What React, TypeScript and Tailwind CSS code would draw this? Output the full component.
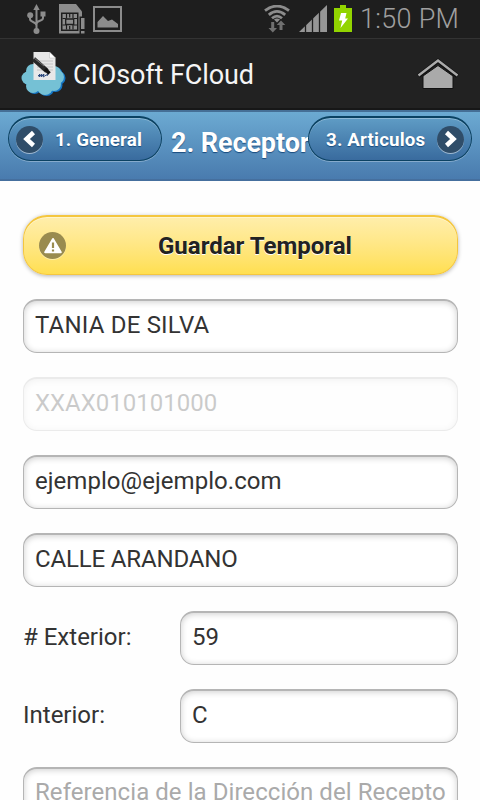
type FieldProps = {
  value: string;
  disabled?: boolean;
  placeholder?: boolean;
  spacing?: string;
};

function UsbIcon() {
  return (
    <svg width="20" height="30" viewBox="0 0 20 30" fill="#8c8c8c">
      <path d="M9.500 0l3.200 6H6.300z" />
      <path
        d="M9.500 5v21M3 12v3c0 3.500 6.500 2.500 6.500 6.500M16 9v5c0 3.500-6.500 2-6.500 6"
        fill="none"
        stroke="#8c8c8c"
        strokeWidth="2"
      />
      <circle cx="3.200" cy="11.300" r="3" />
      <rect x="13.500" y="7.500" width="5" height="5" />
      <circle cx="9.500" cy="27" r="3" />
    </svg>
  );
}

function SimIcon() {
  return (
    <svg width="27" height="30" viewBox="0 0 27 30">
      <path d="M0 0h17l6 7.500v22H0z" fill="#8c8c8c" />
      <path d="M2 8.500h17.500v18.500H2z" fill="#1e1e1e" />
      <path d="M3.500 10h14.500v15.500H3.500z" fill="#8c8c8c" />
      <path
        d="M7.500 10v4.500M10.700 10v3.500M14 10v4.500M7.500 25.500v-4.500M10.700 25.500v-3.500M14 25.500v-4.500M3.500 14.500h3M15 14.500h3M3.500 21h3M15 21h3"
        stroke="#1e1e1e"
        strokeWidth="1.200"
      />
      <path d="M6.700 15h8v5.500h-8z" fill="none" stroke="#1e1e1e" strokeWidth="1.300" />
      <path d="M20.500 12.500h6V30h-6z" fill="#1e1e1e" />
      <path d="M22 14h3.500v11H22zM22 27h3.500v2.500H22z" fill="#8c8c8c" />
    </svg>
  );
}

function GalleryIcon() {
  return (
    <svg width="29" height="26" viewBox="0 0 29 26">
      <rect x="1" y="1" width="27" height="24" fill="none" stroke="#8c8c8c" strokeWidth="2" />
      <path d="M4.500 21.500v-5.500l5.500-6 5 5 4-1.500 6 4.500v3.500z" fill="#8c8c8c" />
    </svg>
  );
}

function WifiIcon() {
  return (
    <svg width="26" height="28" viewBox="0 0 26 28">
      <g fill="none" stroke="#8c8c8c" strokeWidth="2.800">
        <path d="M1 5.700Q13-3.500 25 5.700" />
        <path d="M4.800 9.800Q13 3 21.200 9.800" />
        <path d="M8 13.300Q13 9 18 13.300" />
      </g>
      <path d="M13 17.500l-3-3q3-2 6 0z" fill="#8c8c8c" />
      <path
        d="M7.200 17h3v6h2.800l-4.200 4.500L4.500 23h2.700zM15.500 25h3v-5h2.800L17 15.500 12.700 20h2.800z"
        fill="#707070"
      />
    </svg>
  );
}

function SignalIcon() {
  return (
    <svg width="28" height="28" viewBox="0 0 28 28">
      <path d="M28 0v27H0z" fill="#969696" />
      <path d="M6.500 19v8M13.500 12v15M20.500 5v22" stroke="#1e1e1e" strokeWidth="1.300" />
    </svg>
  );
}

function BatteryIcon() {
  return (
    <svg width="18" height="27" viewBox="0 0 18 27">
      <path d="M6 0h6v3h6v24H0V3h6z" fill="#92d400" />
      <path d="M7 8h5.500l-1.300 5.500H14L6.500 23l1.700-7.500H5z" fill="#fff" />
    </svg>
  );
}

function StatusBar() {
  return (
    <div className="flex h-[39px] items-start border-b border-[#333] bg-[#1e1e1e]">
      <div className="ml-[27px] mt-[4px]"><UsbIcon /></div>
      <div className="ml-[12px] mt-[4px]"><SimIcon /></div>
      <div className="ml-[7px] mt-[6px]"><GalleryIcon /></div>
      <div className="ml-[142px] mt-[5px]"><WifiIcon /></div>
      <div className="ml-[9px] mt-[5px]"><SignalIcon /></div>
      <div className="ml-[7px] mt-[5px]"><BatteryIcon /></div>
      <span className="ml-[8px] mt-[3px] text-[27px] font-light leading-[32px] tracking-[0.3px] text-[#a0a0a0]">
        1:50 PM
      </span>
    </div>
  );
}

function CloudLogo() {
  return (
    <svg width="46" height="46" viewBox="0 0 46 46">
      <g fill="#1576c5" transform="translate(1.500 1)">
        <circle cx="12" cy="20" r="7" />
        <circle cx="7" cy="27" r="6.500" />
        <circle cx="12" cy="35" r="7" />
        <circle cx="24" cy="36" r="8" />
        <circle cx="33" cy="33" r="7" />
        <circle cx="36" cy="26" r="7" />
        <circle cx="33" cy="22" r="7" />
      </g>
      <g fill="#75c1d5">
        <circle cx="12" cy="20" r="7" />
        <circle cx="7" cy="27" r="6.500" />
        <circle cx="12" cy="35" r="7" />
        <circle cx="24" cy="36" r="8" />
        <circle cx="33" cy="33" r="7" />
        <circle cx="36" cy="26" r="7" />
        <circle cx="33" cy="22" r="7" />
        <path d="M10 18h22v20H10z" />
      </g>
      <path d="M12.500 1h16l6 6v22h-22z" fill="#e8e8e8" />
      <path d="M28.500 1v6h6z" fill="#fff" stroke="#bbb" strokeWidth=".5" />
      <path d="M16 10h16M16 13h16M16 16h16M16 19h16" stroke="#c4c4c4" />
      <path d="M17 25l2-2-1 3 3-3-1 3 3-3-1 3 5-3-1 2" fill="none" stroke="#304c80" />
      <path d="M12.500 8l13.500 12" stroke="#292929" strokeWidth="5" />
      <path d="M24 18l4.500 4.500" stroke="#141414" strokeWidth="3.500" />
      <path d="M13 7l10 8" stroke="#777" strokeWidth="1" />
    </svg>
  );
}

function HomeIcon() {
  return (
    <svg width="42" height="32" viewBox="0 0 42 32">
      <path d="M6 30.500V18L21 7.500 36 18v12.500z" fill="#aaa" stroke="#111" />
      <path d="M1.500 18L21 3l19.500 15" fill="none" stroke="#111" strokeWidth="4.500" />
      <path d="M1.500 17.500L21 2.500l19.500 15" fill="none" stroke="#aaa" strokeWidth="2.400" />
    </svg>
  );
}

function AppBar() {
  return (
    <div className="flex h-[71px] items-center border-b-2 border-[#171717] bg-[#222] px-[21px]">
      <CloudLogo />
      <span className="ml-[6px] mt-[2px] text-[27px] leading-[32px] tracking-[-0.1px] text-[#f5f5f5]">
        CIOsoft FCloud
      </span>
      <div className="ml-auto mt-[1px]"><HomeIcon /></div>
    </div>
  );
}

function ArrowBadge({ left }: { left?: boolean }) {
  return (
    <span className="flex size-[27px] shrink-0 items-center justify-center rounded-full bg-[#2f4d69] shadow-[0_1px_0_rgba(255,255,255,0.5)]">
      <svg width="17" height="18" viewBox="0 0 17 18" fill="none" stroke="#fff" strokeWidth="4.500">
        <path d={left ? "M12.500 2.500L5.500 9l7 6.500" : "M4.500 2.500l7 6.500-7 6.500"} />
      </svg>
    </span>
  );
}

function Header() {
  const button =
    "z-10 flex h-[45px] shrink-0 items-center rounded-full border border-t-2 border-[#0b4262] bg-linear-to-b from-[#5f9cc5] to-[#396b9e] text-[18.750px] font-bold text-white shadow-[0_1px_0_rgba(255,255,255,0.3),inset_0_1px_0_rgba(255,255,255,0.3)] [text-shadow:0_1px_1px_#194b7e]";
  return (
    <div className="flex h-[71px] items-start border-y-2 border-t-[#456f96] border-b-[#456f9e] bg-linear-to-b from-[#6caad2] to-[#497bae] px-[8px] pt-[4px]">
      <div className={`${button} w-[154px] pl-[7px]`}>
        <ArrowBadge left />
        <span className="ml-[12px] mt-[2px] whitespace-nowrap tracking-[0.1px]">1. General</span>
      </div>
      <h1 className="ml-[9px] mt-[11px] w-[137px] whitespace-nowrap text-[27px] font-bold leading-[32px] tracking-[-0.1px] text-white [text-shadow:0_1px_1px_#194b7e]">
        2. Receptor
      </h1>
      <div className={`${button} w-[164px] justify-between pl-[17px] pr-[7px]`}>
        <span className="mt-[2px] whitespace-nowrap tracking-[0.150px]">3. Articulos</span>
        <ArrowBadge />
      </div>
    </div>
  );
}

function SaveButton() {
  return (
    <div className="flex h-[60px] items-center rounded-[24px] border border-t-2 border-[#f4c63f] bg-linear-to-b from-[#ffeeab] to-[#ffdf4f] pl-[15px] shadow-[0_1px_4px_rgba(0,0,0,0.3),inset_0_1px_0_rgba(255,255,255,0.4)]">
      <span className="flex size-[27px] items-center justify-center rounded-full bg-[#998b4f] shadow-[0_1px_0_rgba(255,255,255,0.4)]">
        <svg width="18" height="16" viewBox="0 0 18 16">
          <path d="M9 1L1.200 14.200h15.600z" fill="#fff" stroke="#fff" strokeWidth="2" strokeLinejoin="round" />
          <path d="M9 4.500v5.500M9 11.500v2" stroke="#998b4f" strokeWidth="2.200" />
        </svg>
      </span>
      <span className="ml-[92px] whitespace-nowrap text-[24px] font-bold text-[#222] [text-shadow:0_1px_0_#fff]">
        Guardar Temporal
      </span>
    </div>
  );
}

function Field({ value, disabled, placeholder, spacing = "" }: FieldProps) {
  return (
    <div
      className={`flex h-[54px] min-w-0 flex-1 items-center whitespace-nowrap rounded-[14px] border border-t-2 border-[#b5b5b5] bg-white pl-[11px] text-[24px] shadow-[inset_0_1px_6px_rgba(0,0,0,0.2)] ${
        placeholder ? "pb-[6px] text-[#aaa]" : "pb-[4px] text-[#333]"
      } ${disabled ? "opacity-25" : ""} ${spacing}`}
    >
      {value}
    </div>
  );
}

export default function App() {
  return (
    <div className="h-[800px] w-[480px] overflow-hidden bg-[#fefefe] font-['Roboto',sans-serif]">
      <StatusBar />
      <AppBar />
      <Header />
      <main className="flex flex-col gap-[24px] pl-[23px] pr-[22px] pt-[34px]">
        <SaveButton />
        <div className="flex"><Field value="TANIA DE SILVA" spacing="tracking-[0.2px]" /></div>
        <div className="flex"><Field value="XXAX010101000" disabled /></div>
        <div className="flex"><Field value="ejemplo@ejemplo.com" spacing="tracking-[0.050px]" /></div>
        <div className="flex"><Field value="CALLE ARANDANO" spacing="tracking-[-0.150px]" /></div>
        <div className="flex items-center text-[24px] text-[#333]">
          <span className="w-[157px] pb-[2px]"># Exterior:</span>
          <Field value="59" />
        </div>
        <div className="flex items-center text-[24px] text-[#333]">
          <span className="w-[157px] pb-[2px]">Interior:</span>
          <Field value="C" />
        </div>
        <div className="flex">
          <Field value="Referencia de la Dirección del Recepto" placeholder spacing="tracking-[0.060px]" />
        </div>
      </main>
    </div>
  );
}
